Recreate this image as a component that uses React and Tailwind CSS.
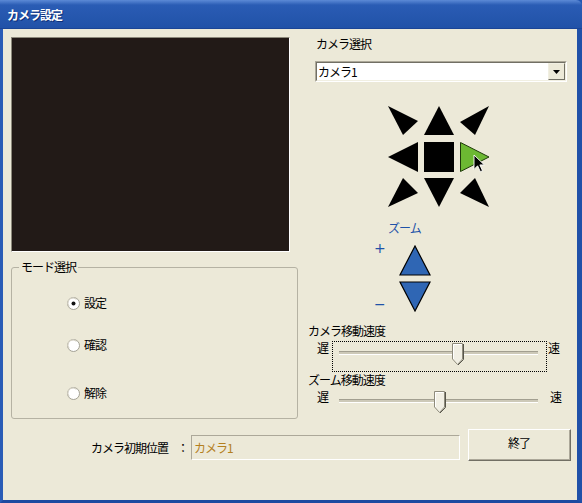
import React from 'react'

const jp = { fontFamily: '"Noto Sans CJK JP", "MS UI Gothic", sans-serif' }

function Radio({ checked }) {
  return (
    <svg width="13" height="13" viewBox="0 0 13 13">
      <circle cx="6.5" cy="6.5" r="6" fill="#fff" stroke="#a3a194" />
      <path d="M2.3 9.5 A5 5 0 0 1 9.5 2.3" fill="none" stroke="#d4d0c3" strokeWidth="1.2" />
      {checked && <circle cx="6.5" cy="6.5" r="2" fill="#111" />}
    </svg>
  )
}

function Thumb() {
  return (
    <svg width="12" height="23" viewBox="0 0 12 23">
      <path d="M0.5 0.5 H10.5 V16 L5.5 21.5 L0.5 16 Z" fill="#f1efe4" stroke="#8e8b7c" />
      <path d="M1.5 16 V1.5 H9.5" fill="none" stroke="#fff" />
      <path d="M11.5 1 V16.5 L6 22" fill="none" stroke="#57554b" />
    </svg>
  )
}

function Track({ pos }) {
  return (
    <div className="relative w-[199px] h-[4px] border-t border-t-[#a29f90] border-b border-b-white bg-[#cdc9b8]">
      <div className="absolute top-[-9px]" style={{ left: pos }}>
        <Thumb />
      </div>
    </div>
  )
}

function ArrowPad() {
  return (
    <svg width="102" height="102" viewBox="0 0 102 102">
      <g fill="#000">
        <polygon points="0,0 30,15 15,29" />
        <polygon points="51,0 36,29 66,29" />
        <polygon points="101,0 72,16 87,29" />
        <polygon points="0,51 30,36 30,66" />
        <rect x="36" y="36" width="30" height="30" />
        <polygon points="0,101 15,72 30,87" />
        <polygon points="36,72 66,72 51,101" />
        <polygon points="101,101 87,72 72,87" />
      </g>
      <polygon points="72.5,36.5 72.5,65.5 101,51" fill="#6cb832" stroke="#1f3a0a" strokeWidth="1" />
      <g transform="translate(86,49) scale(0.9)">
        <path d="M0 0 V16 L4 12 L7 18.5 L9.5 17.5 L6.5 11 H11.5 Z" fill="#000" stroke="#fff" strokeWidth="1" />
      </g>
    </svg>
  )
}

function ZoomButtons() {
  return (
    <svg width="32" height="67" viewBox="0 0 32 67">
      <polygon points="16,1 1,30 31,30" fill="#2f66b4" stroke="#000" strokeWidth="1.2" />
      <polygon points="1,37 31,37 16,66" fill="#2f66b4" stroke="#000" strokeWidth="1.2" />
    </svg>
  )
}

export default function App() {
  return (
    <div className="w-[582px] h-[503px] flex flex-col bg-[#2458b2] text-[12px] tracking-[-1px] text-black" style={jp}>
      <div className="h-[29px] shrink-0 flex items-center pl-[7px] pt-[1px] bg-gradient-to-b from-[#5c8ad6] via-[#2a5cb4] via-[18%] to-[#2152a8] border-b border-b-[#1b4596] rounded-tr-[6px]">
        <span className="text-white font-bold text-[12px] [text-shadow:1px_1px_0_#0c2f78]">カメラ設定</span>
      </div>
      <div className="flex-1 flex flex-col border-l-[3px] border-r-[5px] border-b-[3px] border-l-[#2a5cb6] border-r-[#2050a8] border-b-[#1d4aa0] bg-[#ece9d8] pt-[8px] pl-[8px]">
        <div className="flex">
          <div className="w-[287px] flex flex-col">
            <div className="w-[279px] h-[215px] border-t border-l border-t-[#8c897b] border-l-[#8c897b] border-b border-r border-b-white border-r-white bg-[#221a17]" />
            <fieldset className="mt-[8px] h-[159px] border border-[#b5b2a3] rounded-[3px]">
              <legend className="ml-[7px] px-[2px] leading-[14px]">モード選択</legend>
              <div className="flex flex-col pl-[55px] pt-[22px]">
                <label className="flex items-center h-[14px]">
                  <Radio checked />
                  <span className="ml-[4px] leading-[14px]">設定</span>
                </label>
                <label className="flex items-center h-[14px] mt-[28px]">
                  <Radio />
                  <span className="ml-[4px] leading-[14px]">確認</span>
                </label>
                <label className="flex items-center h-[14px] mt-[34px]">
                  <Radio />
                  <span className="ml-[4px] leading-[14px]">解除</span>
                </label>
              </div>
            </fieldset>
          </div>

          <div className="ml-[10px] w-[262px] flex flex-col">
            <div className="pl-[8px] leading-[14px] h-[14px]">カメラ選択</div>
            <div className="mt-[10px] ml-[7px] w-[252px] h-[21px] border border-t-[#aca899] border-l-[#aca899] border-b-white border-r-white">
              <div className="h-full flex items-center border border-t-[#716f64] border-l-[#716f64] border-b-[#f1efe2] border-r-[#f1efe2] bg-white">
                <span className="flex-1 pl-[1px] leading-[14px]">カメラ1</span>
                <div className="w-[17px] h-full flex items-center justify-center bg-[#ece9d8] border border-t-[#f1efe2] border-l-[#f1efe2] border-b-[#716f64] border-r-[#716f64]">
                  <svg width="7" height="4" viewBox="0 0 7 4"><polygon points="0,0 7,0 3.5,4" fill="#000" /></svg>
                </div>
              </div>
            </div>
            <div className="mt-[24px] ml-[80px] h-[102px]">
              <ArrowPad />
            </div>
            <div className="mt-[13px] ml-[80px] leading-[14px] h-[14px] text-[#1f52a8]">ズーム</div>
            <div className="mt-[6px] ml-[66px] flex items-start">
              <div className="w-[25px] h-[70px] flex flex-col justify-between text-[#1f52a8] text-[14px] leading-[14px] tracking-normal" style={{ fontFamily: '"DejaVu Sans", sans-serif' }}>
                <span>+</span>
                <span>−</span>
              </div>
              <div className="mt-[4px] h-[67px]">
                <ZoomButtons />
              </div>
            </div>
            <div className="mt-[12px] leading-[14px] h-[14px]">カメラ移動速度</div>
            <div className="mt-[3px] flex items-start">
              <span className="ml-[9px] w-[15px] leading-[14px]">遅</span>
              <div className="w-[215px] h-[31px] border border-dotted border-black pt-[9px] pl-[6px]">
                <Track pos={113} />
              </div>
              <span className="ml-[1px] leading-[14px]">速</span>
            </div>
            <div className="mt-[1px] leading-[14px] h-[14px]">ズーム移動速度</div>
            <div className="mt-[3px] flex items-start">
              <span className="ml-[9px] w-[15px] leading-[14px]">遅</span>
              <div className="w-[215px] h-[24px] border border-transparent pt-[8px] pl-[6px]">
                <Track pos={95} />
              </div>
              <span className="ml-[3px] leading-[14px]">速</span>
            </div>
          </div>
        </div>

        <div className="mt-[10px] flex items-start">
          <span className="ml-[80px] w-[86px] mt-[12px] leading-[14px]">カメラ初期位置</span>
          <span className="w-[14px] mt-[12px] leading-[14px]">：</span>
          <div className="mt-[6px] w-[269px] h-[25px] flex items-center pl-[2px] border border-t-[#aca899] border-l-[#aca899] border-b-white border-r-white bg-[#ece9d8] text-[#b4801e] leading-[14px]">
            カメラ1
          </div>
          <button className="ml-[8px] w-[103px] h-[32px] border border-t-white border-l-white border-b-[#716f64] border-r-[#716f64] bg-[#ece9d8]">
            <div className="w-full h-full flex items-center justify-center pb-[3px] border-b border-r border-b-[#aca899] border-r-[#aca899] leading-[14px]">
              終了
            </div>
          </button>
        </div>
      </div>
    </div>
  )
}
